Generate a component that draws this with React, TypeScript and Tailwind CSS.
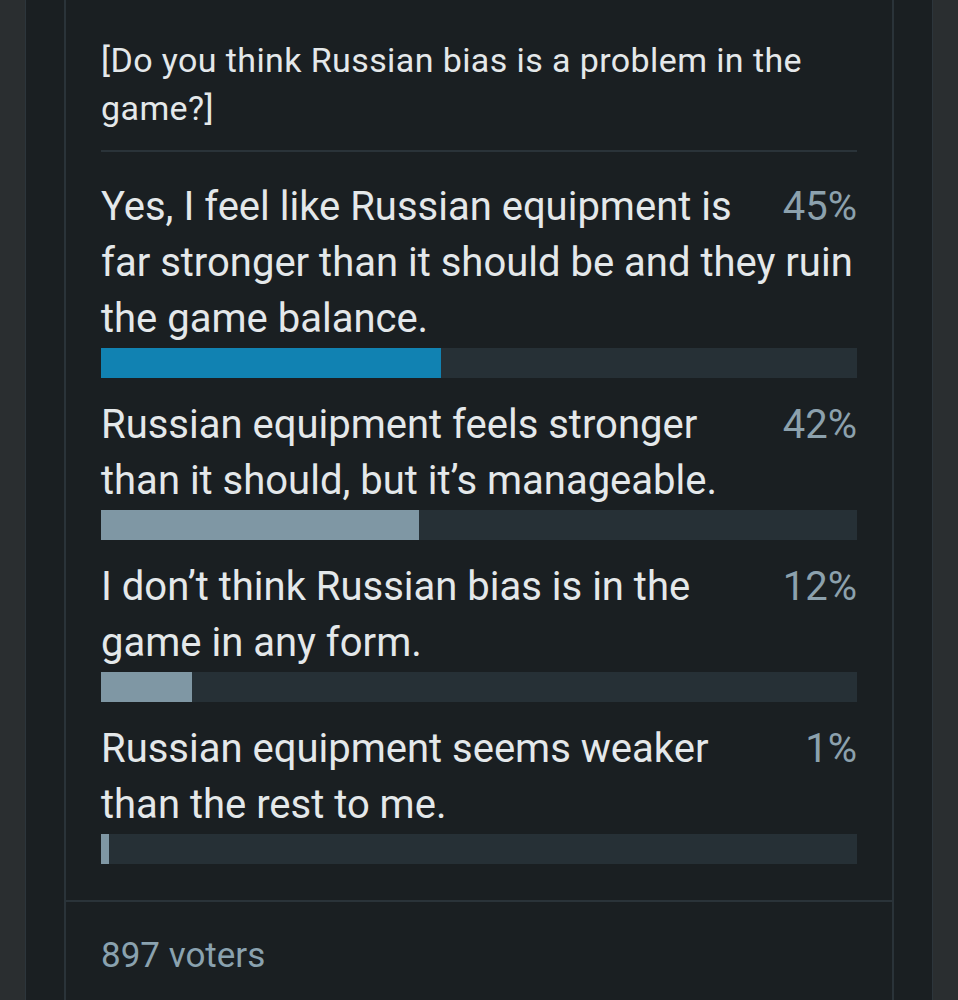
import React from 'react';

interface PollOption {
  label: string;
  percent: number;
  leading?: boolean;
}

const options: PollOption[] = [
  {
    label: 'Yes, I feel like Russian equipment is far stronger than it should be and they ruin the game balance.',
    percent: 45,
    leading: true,
  },
  { label: 'Russian equipment feels stronger than it should, but it’s manageable.', percent: 42 },
  { label: 'I don’t think Russian bias is in the game in any form.', percent: 12 },
  { label: 'Russian equipment seems weaker than the rest to me.', percent: 1 },
];

function PollRow({ option }: { option: PollOption }) {
  return (
    <div className="mb-[19px] last:mb-0">
      <div className="text-[40px] leading-[56px] text-[#e4e8ea]">
        <span className="float-right pl-[16px] text-[#8ca1ad]">{option.percent}%</span>
        {option.label}
      </div>
      <div className="clear-both mt-[1px] h-[30px] bg-[#263036]">
        <div
          className={`h-full ${option.leading ? 'bg-[#1182b2]' : 'bg-[#7f97a4]'}`}
          style={{ width: `${option.percent}%` }}
        />
      </div>
    </div>
  );
}

export default function App() {
  return (
    <div
      className="flex h-[1000px] w-[958px] overflow-hidden bg-[#2a2e30] px-[25px]"
      style={{ fontFamily: 'Roboto, "Noto Sans", sans-serif' }}
    >
      <div className="flex flex-1 border-x border-[#2c353b] bg-[#1a1f22] px-[38px]">
        <div className="flex flex-1 flex-col border-x-2 border-[#2a3339]">
          {/* Question + options */}
          <div className="px-[35px] pt-[36px] pb-[36px]">
            <h2 className="text-[34px] leading-[48px] tracking-[0.4px] text-[#e4e8ea]">
              [Do you think Russian bias is a problem in the game?]
            </h2>
            <div className="mt-[18px] mb-[27px] h-[2px] bg-[#2a3339]" />
            {options.map((option) => (
              <PollRow key={option.percent} option={option} />
            ))}
          </div>

          {/* Footer */}
          <div className="border-t-2 border-[#2a3339] px-[35px] pt-[30px]">
            <span className="text-[35px] leading-[48px] text-[#8aa2af]">897 voters</span>
          </div>
        </div>
      </div>
    </div>
  );
}
